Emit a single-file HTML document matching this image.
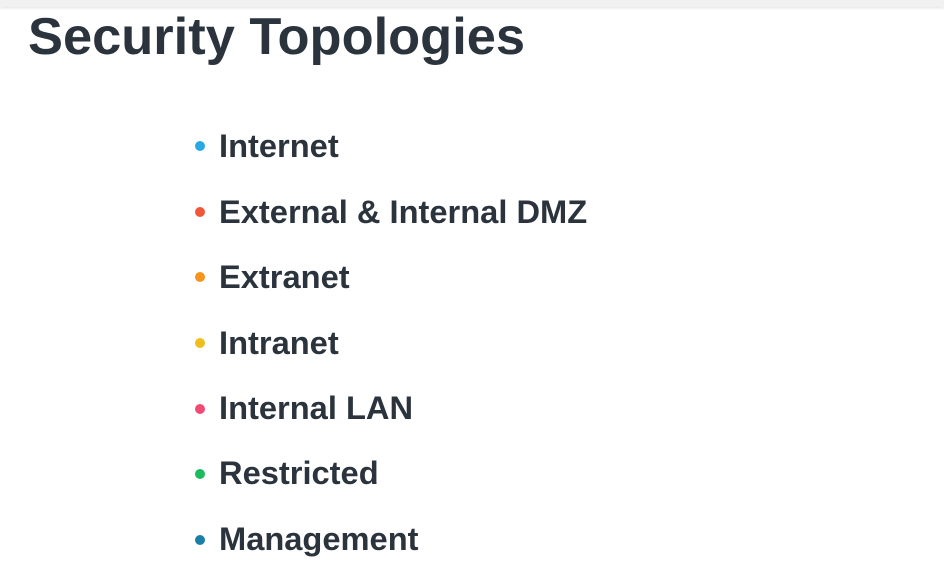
<!DOCTYPE html>
<html><head><style>
html,body{margin:0;padding:0;width:944px;height:566px;overflow:hidden;background:#fff;position:relative;font-family:"Liberation Sans",sans-serif;color:#2b333d}
.bar{position:absolute;left:0;top:0;width:944px;height:7px;background:#f1f1f1;box-shadow:0 1px 3px rgba(0,0,0,.12)}
h1{position:absolute;left:28px;top:7px;margin:0;font-size:52px;font-weight:bold;line-height:60px;white-space:nowrap;transform-origin:0 0;transform:scaleX(1.008)}
.it{position:absolute;left:219px;font-size:32px;font-weight:bold;line-height:40px;white-space:nowrap;transform-origin:0 50%;transform:scaleX(1.02)}
.d{position:absolute;left:195px;width:10px;height:10px;border-radius:50%}
</style></head><body>
<div class="bar"></div>
<h1>Security Topologies</h1>
<div class="d" style="top:141px;background:#27a9e1"></div><div class="it" style="top:126px">Internet</div>
<div class="d" style="top:207px;background:#f0563a"></div><div class="it" style="top:192px">External &amp; Internal DMZ</div>
<div class="d" style="top:272px;background:#f7941d"></div><div class="it" style="top:257px">Extranet</div>
<div class="d" style="top:338px;background:#efbe1c"></div><div class="it" style="top:323px">Intranet</div>
<div class="d" style="top:404px;background:#ef4b75"></div><div class="it" style="top:388px">Internal LAN</div>
<div class="d" style="top:469px;background:#1bbb5f"></div><div class="it" style="top:453px">Restricted</div>
<div class="d" style="top:535px;background:#1a7fa6"></div><div class="it" style="top:519px">Management</div>
</body></html>
